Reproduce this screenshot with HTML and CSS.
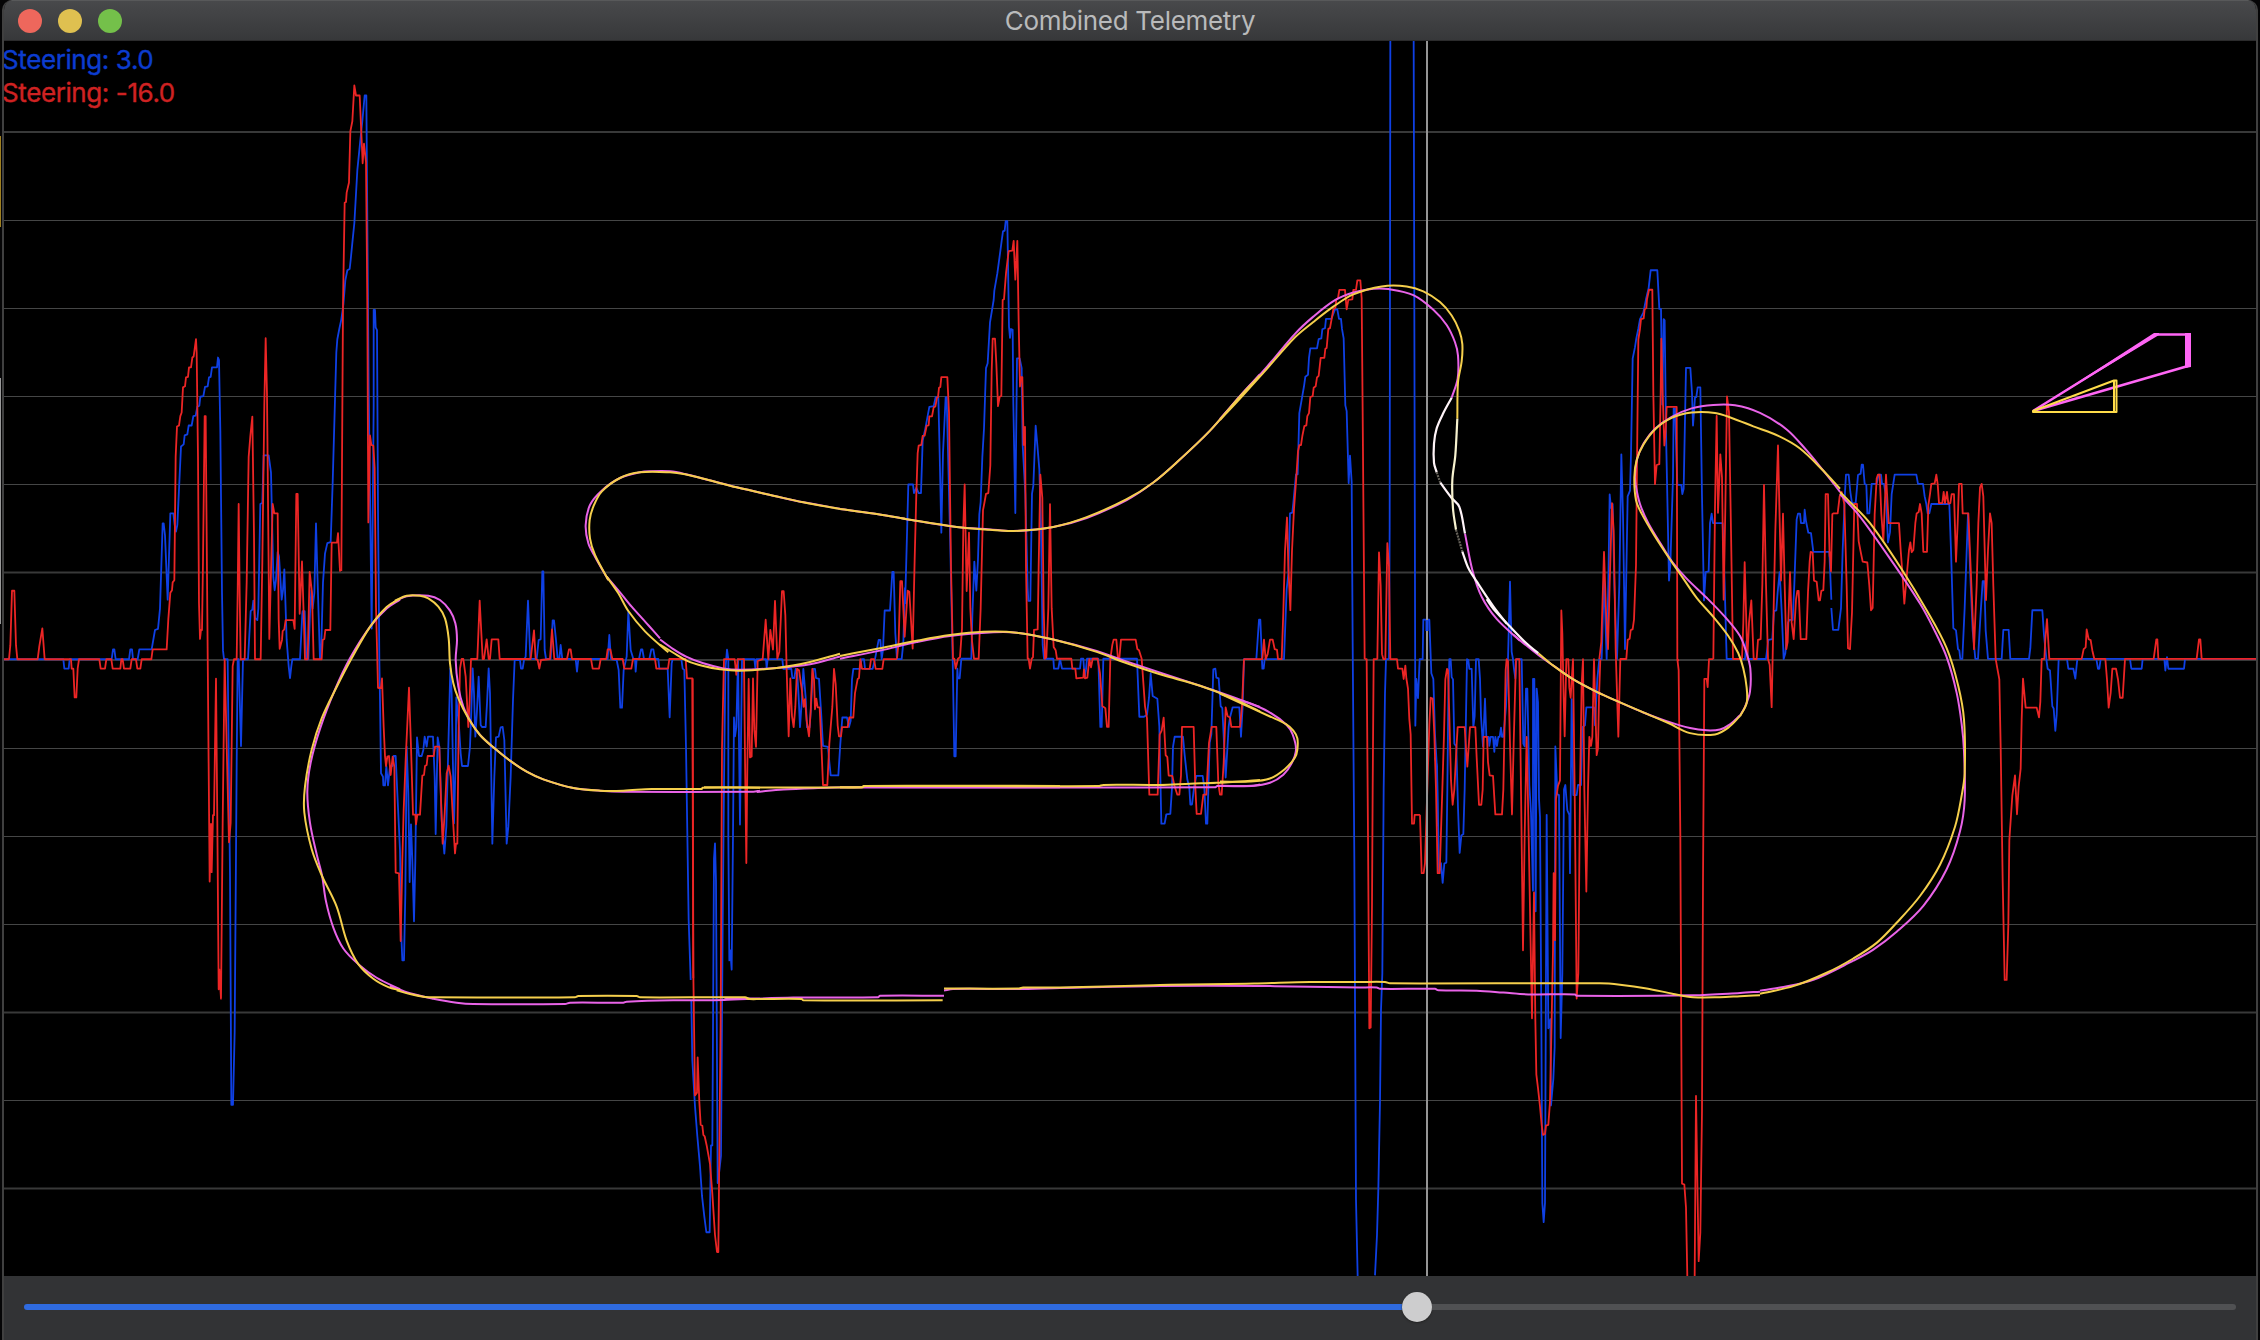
FILE: index.html
```html
<!DOCTYPE html>
<html lang="en">
<head>
<meta charset="utf-8">
<title>Combined Telemetry</title>
<link rel="stylesheet" href="styles.css">
</head>
<body>
<div class="edge edge-gold"></div>
<div class="edge edge-grey"></div>
<main class="window">
  <header class="titlebar">
    <div class="lights"><span class="light close"></span><span class="light minimise"></span><span class="light expand"></span></div>
    <h1>Combined Telemetry</h1>
  </header>
  <section class="plot">
    <svg class="chart" viewBox="4 41 2252 1235" preserveAspectRatio="none">
      <g class="grid">
        <path class="heavy" d="M4 132H2256M4 572.5H2256M4 660H2256M4 1012.5H2256M4 1188.5H2256"/>
        <path d="M4 220.500H2256M4 308.500H2256M4 396.500H2256M4 484.500H2256M4 748.500H2256M4 836.500H2256M4 924.500H2256M4 1100.500H2256"/>
      </g>

      <g class="blue">
        <polyline class="a" points="0,687 190,687 193,705 206,705 209,687 335,687 339,668 343,668 347,687 387,687 391,668 396,668 399,687 413,687 418,668 455,668 465,631 474,629 480,590 488,427 491,427 495,450 503,573 511,408 520,408 524,430 528,443 532,430 543,280 551,276 554,259 562,257 566,240 575,240 580,222 587,221 592,204 598,202 601,185 610,184 615,166 623,165 627,148 632,147 636,129 651,129 654,110 657,115 661,250 666,560 669,670 672,687 683,687 690,1100 694,1539 699,1539 704,1400 710,890 713,687 716,687 723,853 729,687 744,687 752,595 757,592 760,575 765,608 772,612 775,590 781,390 787,388 791,297 806,297 813,330 820,530 824,555 828,535 833,482 837,490 845,573 849,555 853,515 860,650 866,700 870,723 874,700 877,687 900,687 907,600 908,595 914,595 919,687 925,687 930,600 934,555 938,590 943,560 948,427 952,520 960,687 964,660 969,540 975,485 982,465 992,463 998,350 1009,100 1012,75 1018,55 1024,37 1030,10"/>
        <polyline class="b" points="190,600 196,540 202,515 209,512 212,490 218,440 223,400 232,270 240,205 247,150 254,87 259,87 262,400 266,800 275,1393 281,850 281,612 285,612 287,655 291,662 294,1100 298,1470 300,1568"/>
        <polyline class="c" points="120,420 123,640 129,650 130,676 135,676 139,618 144,676 150,620 158,618 161,588 167,588 172,700 180,870 184,1130 187,1201 192,1201 196,1000 200,560 205,700 209,966 213,793 217,900 222,1084 226,900 231,532 237,588 245,588 250,570 254,530 260,560 264,530 279,530 284,650 287,822 293,532 298,560 305,780 313,881 319,800 325,560 331,325 335,400 342,790 347,600 349,412 357,500 362,580 366,618 384,618 390,560 394,450 398,325 402,400 406,530 411,450 416,350 422,495 426,501 437,501 441,430 446,325 450,400 457,851 463,650 468,532 476,530 482,502 488,501 493,540 500,851 505,800 512,650 519,420 524,300 540,300 543,326 548,326 552,300 557,290 564,122 571,296 590,297 596,240 602,238 607,34 610,34 614,270 618,297 632,297 638,181 642,181 648,240 653,297 658,297 662,255 667,297 707,297 711,335 715,297 803,297 808,225 813,297 830,300 836,330 841,443 846,443 851,330 860,290 865,155 872,270 880,297 885,297 887,335 890,297 897,297 903,268 907,268 912,297 928,297 934,268 940,268 945,297 955,297 958,326 983,326 989,472 995,310 998,297 1024,297 1028,326 1033,330 1038,560 1046,1080 1052,1260"/>
        <polyline class="d" points="94,960 97,1090 105,1190 112,1255 120,1320 126,1385 133,1430 139,1464 149,1464 153,1275 157,1275 162,650 165,617 168,700 173,1357 178,1330 183,1297 188,800 192,487 196,240 201,195 205,216 205,600 208,872 211,850 215,892 219,600 222,343 225,384 229,364 234,216 240,576 246,218 250,216 283,216 286,235 289,216 318,216 320,235 323,216 367,216 370,237 394,237 397,257 403,257 407,237 412,250 416,300 420,364 426,300 430,237 437,300 441,364 449,364 453,320 459,237 465,237 468,257 477,259 484,340 489,405 504,407 508,440 512,469 535,469 541,400 547,343 561,343 567,364 572,350 576,260 580,237 600,237 605,216 612,216 615,237 638,237 645,216 656,174 661,174 665,216 669,195 674,110 690,110 697,26 701,26 706,160 711,216 725,216 730,180 735,60"/>
        <polyline class="e" points="195,990 198,910 205,697 219,697 222,718 229,705 236,718 243,718 248,590 256,560 268,507 281,505 287,483 295,483 299,620 304,815 309,620 317,483 320,483 325,650 331,850 338,1124 343,1363 347,1363 352,1148 354,1172 359,1172 364,1124 388,1124 394,1124 397,1020 403,886 409,957 414,880 418,770 422,740 427,630 432,560 438,412 443,400 450,300 461,245 463,222 472,180 481,125 485,100 489,77 494,75 497,52 502,52 507,310 510,338 513,316 518,318 520,500 526,767 531,388 539,388 545,412 548,600 556,720 563,950 565,982 571,982 576,720 580,700 587,553 592,600 598,660 603,800 608,1090 612,1124 640,1124 642,1148 655,1148 660,1124 666,1148 720,1148 723,1124 730,1124 734,1170 738,1150 741,1124 775,1124 781,1291 785,1291 790,1124 891,1124 898,1266 912,1266 921,1261 927,1220 932,1160 938,1215 952,1222 958,1290 964,1528 974,1528 979,1505 991,1504 996,1440 999,1340 1004,1315 1029,1315 1034,1360 1042,1420 1048,1440 1051,1481 1056,1481 1062,1440 1069,1411 1088,1411 1093,1440 1098,1528 1102,1528 1109,1330 1114,1310 1120,1150 1126,1148 1129,1170 1136,1172 1142,1240 1147,1245 1157,1415 1166,1290 1170,1268 1178,1243 1198,1243 1203,1315 1208,1240 1212,1124"/>
        <polyline class="f" points="70,1043 109,1043 117,940 121,940 127,1068 131,1068 134,1043 192,1043 200,860 205,820 210,662 217,660 220,635 228,560 233,560 238,400 247,355 252,330 256,305 264,300 267,256 271,231 291,231 296,207 304,205 307,181 315,178 318,154 334,154 345,129 352,129 357,154 363,154 366,180 371,205 376,380 380,395 386,583 390,511 395,580 398,1000 403,1568 408,2456 413,2656"/>
        <polyline class="g" points="45,1558 51,1470 55,1370 60,1180 63,980 67,900 71,500 75,290 78,216 87,216"/>
        <polyline class="f" points="507,1043 509,700 511,-580"/>
        <polyline class="f" points="581,-580 586,1217 589,1095 594,1145 599,1043 608,1043 610,940 628,940 634,1080 640,1095 645,1240 651,1330 653,1480"/>
        <polyline class="g" points="225,430 231,450 235,600 237,682 243,660 248,703 253,661 259,659 262,500 265,300 268,216 272,216 275,255 279,260 283,400 289,406 294,540 299,638 304,600 310,597 314,500 321,216 325,218 328,237 335,237 340,364 344,340 348,216 356,216 360,259 363,340 369,406 375,302 379,385 386,385 388,405 392,385 399,385 403,418 406,385 411,405 415,385 419,385 423,365 426,385 430,385 438,320 444,216 450,47 455,200 459,216 462,237 466,258 469,216 485,216 490,400 494,406 498,280 502,280 508,490 513,550 519,720 519,259 523,259 527,765 530,280 534,310 537,520 540,560 544,1000 547,1400 551,1442 555,1400 560,555 565,1020 571,1000 573,1188 580,1130 584,1060 586,406 592,510 597,512 602,1041 607,900 612,500 616,490 622,545 628,555 630,682 635,303 640,512 650,512 654,490 663,490 667,364 675,360 679,321 702,321 705,360 712,259 718,216 725,216"/>
        <polyline class="h" points="178,1095 185,1095 192,880 200,1095 205,900 209,665 213,700 218,690 223,900 231,1095 238,900 244,560 249,720 255,1069 263,670 270,655 273,560 278,310 285,280 289,257 295,232 300,207 310,190 318,155 326,125 332,79 352,79 358,180 363,180 367,430 371,207 374,210 378,500 387,890 391,850 399,620 401,440 405,440 412,640 424,640 427,664 431,650 438,334 451,334 456,400 459,485 465,412 469,410 473,385 481,385 486,670 492,942 497,868 506,866 510,740 515,715 519,740 548,740 554,900 560,1095 615,1095 619,1050 624,1095 678,1095 685,1045 697,1043 702,970 709,968 713,920 719,868 725,970 731,1095 736,1080 744,1000 748,993 758,993 763,900 770,730 774,715 780,715 783,740 792,740 794,705 798,735 805,765 813,766 820,815 868,815 874,940"/>
        <polyline class="i" points="214,690 219,739 235,739 243,690 248,560 255,430 258,391 266,391 271,430 276,455 287,455 291,420 294,392 302,389 305,369 309,369 314,412 319,414 322,478 328,478 335,412 350,412 356,391 363,391 366,412 372,412 378,440 384,543 390,520 395,435 404,391 469,391 474,412 489,412 494,440 499,457 503,478 508,478 514,457 568,457 573,560 580,735 588,740 594,782 598,785 601,804 607,804 614,690 624,478 630,600 638,740 646,804 654,804 662,700 668,630 673,630 677,740 684,804 725,804 730,739 746,739 751,804 807,804 811,780 817,695 847,695 852,750 860,810 863,826 870,830 877,910 881,915 886,965 890,930 896,804 921,804 925,826 940,826 946,848 952,804 1009,804 1014,826 1018,826 1022,804 1110,804 1114,826 1145,826 1148,804 1213,804 1216,830 1221,800 1225,826 1272,826 1275,804 1490,804"/>
      </g>

      <g class="red">
        <polyline class="a" points="0,687 27,687 31,660 36,556 43,556 48,660 52,687 113,687 118,662 127,628 134,687 213,687 215,705 220,705 224,760 229,760 233,705 237,687 298,687 302,705 315,705 319,687 334,687 338,705 361,705 364,687 368,687 372,705 391,705 395,687 408,687 412,705 421,705 425,687 454,687 458,668 500,668 505,610 511,560 516,555 518,540 523,536 527,300 531,242 537,240 541,222 545,215 549,167 555,165 558,148 564,147 567,129 573,129 577,110 581,108 588,75 590,100 594,300 597,580 600,648 603,631 606,631 609,500 614,222 617,222 622,600 629,1112 633,1002 635,1094 639,985 642,985 648,724 652,1000 656,1318 658,1280 663,1336 668,1000 674,687 680,850 687,1037 692,1000 698,700 702,687 710,687 713,560 716,390 719,560 722,687 734,687 740,540 746,300 751,260 757,223 762,450 765,687 782,687 787,500 793,200 797,73 801,180 808,648 813,520 818,390 823,408 833,408 836,610 839,667 846,650 848,633 853,630 857,612 880,612 884,629 889,371 893,371 899,600 906,500 911,600 915,687 923,687 929,520 936,560 941,687 965,687 968,650 973,648 976,631 991,631 995,464 1011,464 1014,446 1020,518 1024,515"/>
        <polyline class="b" points="184,1252 189,600 194,350 198,348 200,325 207,300 211,175 217,150 223,62 228,87 239,87 248,253 252,205 258,250 262,600 265,1133 270,920 274,943 280,945 284,1000 288,1340 294,1538 303,1538"/>
        <polyline class="c" points="115,384 123,384 126,355 131,500 135,588 138,618 142,590 147,588 152,645 158,590 163,620 167,938 177,940 182,1143 187,900 191,750 197,600 207,383 213,560 219,764 226,764 228,793 232,764 240,764 247,647 252,645 255,618 260,615 263,588 281,588 285,560 298,560 303,720 308,851 314,760 320,640 326,617 332,650 339,780 345,880 348,851 352,851 356,500 360,325 365,297 370,297 377,350 385,501 389,420 393,297 412,297 419,122 428,297 432,297 440,238 446,297 450,297 455,238 475,238 479,297 572,297 582,211 587,297 593,300 598,326 603,300 630,297 636,208 643,297 681,297 687,268 692,268 696,297 753,297 758,326 777,326 782,297 799,297 803,268 811,268 817,297 848,297 853,326 874,326 879,297 945,297 949,326 984,326 988,297 1037,297 1041,355 1057,355 1060,1255"/>
        <polyline class="d" points="98,258 100,900 105,1166 111,1160 113,1083 118,1180 122,1230 127,1232 130,1252 134,1255 140,1275 150,1315 157,1380 165,1470 171,1507 175,1507 182,1000 186,410 190,278 192,216 224,216 229,250 233,216 249,216 252,216 255,430 259,660 262,450 266,259 270,430 275,428 279,258 283,370 288,407 293,220 308,216 317,130 325,216 331,152 339,195 345,89 352,215 358,200 366,68 371,68 376,120 380,240 386,384 391,258 396,340 401,364 406,320 411,237 417,240 425,280 431,320 435,303 440,350 447,384 452,330 457,237 462,260 465,325 469,302 473,321 479,321 484,400 489,490 502,490 508,400 517,320 522,237 527,270 533,360 537,384 543,384 546,364 563,364 568,343 580,343 585,290 593,259 597,257 601,216 606,237 629,237 633,216 642,216 647,237 667,237 671,216 711,216"/>
        <polyline class="e" points="171,1124 176,1080 181,934 186,934 194,1070 203,957 208,960 218,1099 224,880 229,720 233,620 236,602 244,600 248,578 254,577 260,553 266,552 268,530 276,530 281,508 286,506 291,484 294,483 297,460 301,458 304,434 322,434 327,520 333,900 339,1124 343,1124 347,1148 354,1124 360,1120 366,1050 370,800 374,697 380,958 387,815 391,1000 396,1080 402,1124 416,1124 422,1000 429,760 433,743 438,720 445,718 451,650 455,420 458,340 465,340 469,400 474,505 479,482 484,480 488,245 492,243 498,180 506,125 517,124 521,100 526,195 532,100 536,300 540,457 543,434 547,434 551,600 555,556 558,900 563,1124 566,1124 570,1148 575,1124 579,1120 582,1053 593,1052 596,900 601,673 607,730 611,1000 615,1124 619,1120 625,1000 630,745 635,1000 641,1095 647,1103 651,1124 694,1124 697,1148 706,1148 709,1172 730,1170 732,1150 735,1172 742,1170 748,1125 753,1145 758,1124 773,1124 780,1160 787,1240 796,1245 801,1291 806,1291 811,1124 817,1090 821,1077 829,1077 834,1124 838,1124 843,1077 887,1077 892,1100 897,1103 905,1124 915,1240 921,1270 928,1457 953,1457 959,1310 965,1300 971,1268 977,1360 982,1365 986,1410 997,1411 1003,1434 1012,1457 1018,1457 1023,1410 1026,1291 1061,1291 1066,1440 1070,1504 1083,1504 1090,1457 1099,1457 1107,1330 1115,1291 1129,1291 1135,1430 1140,1457 1145,1457 1151,1380 1157,1243 1163,1265 1170,1268 1174,1291 1200,1291 1206,1240 1212,1124"/>
        <polyline class="f" points="72,1043 127,1043 132,992 137,1043 143,1030 150,992 158,992 164,1017 171,1019 174,1043 185,1043 190,920 195,760 201,673 205,800 211,915 216,760 222,650 228,580 234,500 238,484 243,484 247,460 253,434 259,432 262,408 267,400 271,358 278,356 281,334 287,330 291,307 296,303 302,256 313,256 316,232 320,230 325,180 330,178 340,129 346,125 349,103 354,100 358,78 375,78 380,129 385,104 397,103 400,78 408,78 412,53 421,53 425,100 428,400 434,1043"/>
        <polyline class="g" points="14,216 20,216 24,600 28,1020 32,1018 36,750 38,500 41,216 53,216"/>
        <polyline class="f" points="472,1043 477,764 482,850 486,1030 490,1043 496,1043 502,740 507,800 511,1043 531,1043 534,1068 547,1068 551,1095 556,1060 559,1093 564,1120 568,1200 572,1240 576,1473 582,1473 584,1450 600,1450"/>
        <polyline class="g" points="180,555 185,682 191,682 195,660 204,450 208,360 212,300 218,302 223,380 228,500 233,682 239,682 247,500 252,380 256,260 261,237 264,240 268,340 273,480 278,533 283,500 290,400 293,364 314,364 318,410 322,450 330,364 346,364 350,430 357,533 364,533 368,500 371,385 381,385 384,440 389,469 399,470 406,554 426,554 430,500 437,240 440,216 444,220 450,400 456,554 461,400 468,216 478,216 483,500 489,850 494,600 500,385 505,560 511,800 516,998 522,724 526,1000 529,1120 534,1150 540,1190 545,1230 549,1252 555,1250 558,1232 565,1230 570,1180 575,1000 579,850 581,682 585,828 588,520 594,492 600,480 604,110 607,160 611,300 614,384 619,216 625,216 628,278 632,300 639,216 644,500 650,955 655,900 660,500 665,270 669,216 673,500 679,722 684,500 688,385 693,405 697,385 702,216 710,425 714,410 717,300 721,216"/>
        <polyline class="h" points="178,1095 184,1050 192,815 198,970 204,1069 209,900 216,688 221,760 227,1070 235,1298 241,1095 259,1095 263,1045 269,1042 272,1020 278,1017 282,992 288,850 292,500 295,260 300,232 303,207 311,205 314,181 319,178 321,155 327,130 337,130 340,400 345,638 350,588 358,586 362,400 364,258 368,400 373,537 377,500 380,436 410,436 411,700 412,1095 416,1100"/>
        <polyline class="g" points="952,216 956,240 961,600 966,1358 973,1360 978,1410 982,1562"/>
        <polyline class="g" points="1004,1562 1008,1167 1012,1350 1016,1527 1021,1465 1026,1200 1029,700 1033,259 1040,259 1043,277 1047,216 1060,216"/>
        <polyline class="h" points="520,1095 525,700 530,460 534,713 541,560 546,620 551,940 556,700 561,409 567,450 573,760 579,1095 606,1095 610,1000 614,842 619,1000 622,1095 627,1000 634,942 641,1095 650,1095 654,1045 662,1043 667,900 672,640 678,900 684,1095 689,1110 695,1221 700,1000 706,760 714,537 723,890 729,715 734,900 739,1069 743,1050 750,868 755,1000 761,1043 768,940 772,917 776,917 782,1043 799,1043 804,920 809,840 812,815 818,817 822,890 830,893 836,942 840,942 844,917 850,915 854,840 857,664 864,664 869,828"/>
        <polyline class="i" points="209,563 213,608 217,480 220,478 233,478 239,440 245,430 253,457 260,640 264,780 270,782 276,700 283,457 291,457 296,540 302,564 308,586 322,588 328,640 333,695 338,690 344,480 350,400 354,391 359,391 364,480 370,540 378,391 386,500 417,500 422,560 428,620 433,680 440,620 447,560 451,543 455,565 460,560 466,500 470,478 476,475 480,457 485,478 490,564 501,564 505,460 510,435 514,412 524,411 529,391 533,412 537,455 547,455 551,430 555,455 561,430 565,456 571,455 575,435 582,435 588,586 593,500 597,412 605,412 608,478 625,478 632,600 642,782 650,640 655,500 660,420 665,412 670,440 678,672 684,560 690,478 695,500 700,640 707,804 712,825 718,850 722,1000 728,1300 734,1523 740,1523 745,1400 748,1210 757,1110 765,1065 771,1152 776,1090 782,1050 785,940 789,848 797,913 830,913 837,935 841,900 845,804 853,804 856,760 861,715 868,804 965,804 971,782 977,778 980,738 986,760 992,762 997,785 1003,804 1036,804 1041,850 1046,913 1052,880 1057,826 1068,826 1074,850 1080,891 1088,891 1095,804 1181,804 1189,760 1192,760 1195,804 1310,804 1317,760 1321,760 1325,804 1490,804"/>
      </g>

      <path class="cursor" d="M1427 41V1276"/>
      <path class="cursor-mark" d="M1427 620V631"/>

      <g class="track magenta">
        <polyline class="a" points="1200,573 1160,590 1110,625 1050,685 1005,745 960,820 932,885 922,940 930,1000 950,1060 966,1100 978,1150 1000,1200 1030,1240 1075,1270 1130,1296 1200,1318"/>
        <polyline class="c" points="160,127 200,109 265,107 300,120 330,152 346,190 351,240 347,300 355,380 370,440 395,490 420,525 460,562 510,602 560,635 610,658 700,684 780,692 850,695 1240,695 1260,692"/>
        <polyline class="c" points="150,1278 210,1300 280,1316 350,1328 400,1332 675,1332 690,1328 850,1328 860,1325 1000,1321 1150,1320 1160,1316 1260,1316"/>
        <polyline class="d" points="290,505 370,500 460,497 560,495 1200,495"/>
        <polyline class="d" points="190,958 400,953 655,952 660,949 852,949"/>
        <polyline points="944,990.500 953,989 1014,989 1060,988 1160,986 1260,986 1360,987.500"/>
        <polyline class="e" points="0,1439 1125,1439 1132,1436 1235,1436 1260,1432"/>
        <polyline class="f" points="0,1374 95,1374 150,1366 190,1345 215,1315 228,1280 218,1240 200,1215 145,1180 90,1159 30,1143 0,1133"/>
        <polyline class="e" points="1260,1242 1180,1218 1080,1190 850,1128 770,1105 640,1077 530,1060 460,1059 330,1068 230,1083 120,1104 0,1124"/>
        <polyline class="d" points="540,210 450,227 350,235 240,239 190,236 130,225 80,211 40,194 0,173"/>
        <polyline class="c" points="960,235 920,190 875,140 840,97 800,50"/>
        <polyline class="j" points="115,390 75,320 55,280 47,225 60,165 95,122 150,84 210,67 240,64 300,64 345,72 415,90 500,112 610,137 700,157 810,176"/>
        <polyline class="e" points="0,757 100,768 200,782 350,801 450,807 520,811 640,801 740,779 860,735 940,692 1010,643 1110,565 1200,480 1260,427"/>
        <polyline class="f" points="0,415 60,357 140,280 225,193 280,148 345,105 400,85 460,75 505,76 580,92 640,130 680,170 705,215 714,250 713,310 695,360"/>
        <polyline class="f" points="735,715 757,810 785,880 830,938 900,995"/>
        <polyline class="g" points="460,163 535,207 580,230 640,260 710,287 780,310 850,332 920,351 990,366 1040,371 1080,369 1110,358 1140,338"/>
        <polyline class="h" points="600,1243 615,1220 630,1180 631,1120 620,1080 600,1035 555,985 500,935 440,885 400,845 370,805 325,740 300,690 287,640 285,615 292,570 312,530 345,493 395,462 455,440 520,431 585,432 660,452 740,495 800,550 850,603 900,658"/>
        <polyline class="i" points="240,435 300,485 400,590 480,680 520,735 560,800 590,880 605,950 612,1010 614,1120 600,1190 560,1275 490,1357 410,1415 340,1455 280,1480 160,1523 60,1540 0,1547"/>
        <polyline class="g" points="1200,940 1140,943 1000,948 650,949 645,946 505,946 430,942 350,938 235,937 225,934 60,934 50,931 0,931"/>
      </g>

      <g class="track yellow">
        <polyline class="a" points="1200,571 1160,587 1110,625 1055,685 1010,740 965,800 935,860 915,930 913,980 935,1050 965,1100 1010,1160 1040,1225 1075,1270 1120,1298 1165,1314 1200,1320"/>
        <polyline class="c" points="165,122 200,107 240,107 265,115 295,140 315,175 326,235 330,310 340,370 355,415 385,475 420,525 460,562 510,602 560,635 610,658 700,684 780,692 850,692 935,687 1085,687 1088,683 1260,683"/>
        <polyline class="c" points="170,1291 210,1302 250,1310 280,1312 705,1312 715,1308 890,1308 900,1312 1215,1312 1230,1317 1260,1317"/>
        <polyline class="d" points="132,495 605,495 612,492 1200,492"/>
        <polyline class="d" points="258,954 265,956 425,956 430,959 848,959"/>
        <polyline points="944,988.500 1019,988.500 1023,987.500 1060,987.500 1160,985 1254,983.500 1310,982 1360,982"/>
        <polyline class="e" points="0,1439 68,1439 72,1436 775,1436 790,1433 960,1433 1050,1430 1130,1428 1230,1423 1260,1421"/>
        <polyline class="f" points="0,1363 90,1363 150,1355 195,1330 225,1300 232,1280 232,1250 220,1230 198,1213 150,1193 75,1163 0,1133"/>
        <polyline class="e" points="1260,1253 1170,1218 1080,1190 960,1162 850,1132 770,1107 640,1077 530,1060 430,1058 330,1066 230,1080 120,1098 0,1117"/>
        <polyline class="d" points="540,204 450,222 350,235 240,241 180,238 130,231 80,219 40,202 0,184"/>
        <polyline class="c" points="985,277 915,214 865,153 835,100 800,50"/>
        <polyline class="j" points="115,390 75,315 60,265 59,210 70,170 95,125 150,84 210,67 300,67 345,73 415,90 500,112 610,137 700,157 810,177"/>
        <polyline class="e" points="0,757 100,768 200,782 350,801 450,808 520,811 640,801 740,777 860,733 940,692 1010,643 1110,565 1200,481 1260,430"/>
        <polyline class="f" points="0,418 60,362 140,285 225,202 280,162 340,122 400,90 485,69 560,69 610,82 660,110 695,145 718,185 727,220 725,265 714,320 712,415"/>
        <polyline class="g" points="535,203 580,230 640,260 710,287 780,310 850,332 925,355 990,377 1065,380 1105,365 1140,340"/>
        <polyline class="h" points="600,1245 620,1210 620,1170 610,1120 595,1080 565,1035 520,985 470,935 430,885 390,835 345,775 305,715 288,680 283,620 290,575 310,535 345,495 395,465 455,451 525,452 575,465 640,487 715,512 780,545 850,603 900,650"/>
        <polyline class="i" points="240,430 260,445 330,500 425,603 500,695 560,780 595,865 612,940 614,1060 605,1110 585,1180 540,1265 480,1335 410,1395 350,1440 280,1475 200,1507 100,1537 0,1554"/>
        <polyline class="g" points="1200,948 1140,950 1080,952 1000,952 940,945 860,933 780,925 720,922 90,922 75,919 0,919"/>
      </g>

      <g class="track braking">
        <polyline class="f" points="695,360 670,400 650,440 642,480 642,530 650,555"/>
        <polyline class="f faint" points="650,555 661,582"/>
        <polyline class="f" points="661,582 695,622 718,645 735,715"/>
        <polyline class="f cream" points="712,415 706,510 697,575 699,650 708,705"/>
        <polyline class="f faint" points="708,705 727,762"/>
        <polyline class="f" points="727,762 745,805 770,840 820,905 860,950"/>
        <polyline class="g" points="380,85 400,106 450,145 500,182 535,203"/>
      </g>

      <g class="vectors">
        <path class="vec-magenta" d="M2033 411L2154 333H2159V335Z"/>
        <path class="vec-magenta line" d="M2033 411L2156 334.500H2190M2188 366L2033 411"/>
        <path class="vec-magenta" d="M2185 333H2191V367L2185 368Z"/>
        <path class="vec-yellow line" d="M2033 411L2114 380.500V412H2033ZM2114 380.500H2116.500V412H2110"/>
      </g>
    </svg>
    <ul class="readout">
      <li class="lap-a">Steering: 3.0</li>
      <li class="lap-b">Steering: -16.0</li>
    </ul>
  </section>
  <footer class="scrubber">
    <span class="played"></span><span class="knob"></span><span class="remaining"></span>
  </footer>
</main>
<script src="tracks.js"></script>
</body>
</html>
```
FILE: tracks.js
```js
// Rounds the sampled racing lines into smooth curves.
document.querySelectorAll(".track polyline").forEach((line) => {
  const n = line.getAttribute("points").trim().split(/\s+/).map((p) => p.split(",").map(Number));
  if (n.length < 3) return;
  const tangents = n.map((_, i) => {
    const a = n[Math.max(0, i - 1)];
    const b = n[Math.min(n.length - 1, i + 1)];
    const len = Math.hypot(b[0] - a[0], b[1] - a[1]) || 1;
    return [(b[0] - a[0]) / len, (b[1] - a[1]) / len];
  });
  let d = `M${n[0]}`;
  for (let i = 1; i < n.length; i++) {
    const p = n[i - 1], q = n[i], s = tangents[i - 1], t = tangents[i];
    const h = Math.hypot(q[0] - p[0], q[1] - p[1]) / 3;
    d += `C${p[0] + s[0] * h} ${p[1] + s[1] * h} ${q[0] - t[0] * h} ${q[1] - t[1] * h} ${q[0]} ${q[1]}`;
  }
  const path = document.createElementNS("http://www.w3.org/2000/svg", "path");
  path.setAttribute("d", d);
  path.setAttribute("class", `${line.getAttribute("class") || ""} line`);
  line.replaceWith(path);
});
```
FILE: styles.css
```css
* { box-sizing: border-box; }

body {
  margin: 0;
  height: 1340px;
  padding: 0 2px;
  background: #050506;
  font-family: Inter, "Liberation Sans", sans-serif;
  overflow: hidden;
}

/* slivers of the windows behind */
.edge { position: absolute; left: 0; width: 1px; }
.edge-gold { top: 136px; height: 91px; background: #a08020; }
.edge-grey { top: 378px; height: 246px; background: #999; }

.window {
  display: flex;
  flex-direction: column;
  height: 1340px;
  border: solid #404040;
  border-width: 0 2px;
  border-radius: 10px 10px 0 0;
  overflow: hidden;
  background: #000;
}

.titlebar {
  display: grid;
  grid-template-columns: 1fr auto 1fr;
  align-items: center;
  height: 41px;
  flex: none;
  padding-left: 14px;
  padding-right: 14px;
  background: linear-gradient(#48494b, #37383a);
  border-top: 1px solid #58595a;
  border-bottom: 1px solid #2b2b2c;
}

.lights { display: flex; gap: 16px; }
.light { width: 24px; height: 24px; border-radius: 50%; }
.close { background: #ee675c; }
.minimise { background: #dfc050; }
.expand { background: #74c04a; }

h1 {
  margin: 0;
  color: #b9babb;
  font-size: 26px;
  font-weight: 400;
  line-height: 38px;
  letter-spacing: -0.3px;
  white-space: nowrap;
}

.plot { position: relative; height: 1235px; flex: none; }
.chart { display: block; width: 2252px; height: 1235px; }

.chart polyline, .chart .line {
  fill: none;
  vector-effect: non-scaling-stroke;
  stroke-linejoin: round;
}

.grid path { fill: none; stroke: #454646; stroke-width: 1; }
.grid .heavy { stroke: #383939; stroke-width: 2; }

.blue { stroke: #0f40e4; stroke-width: 1.8; }
.red { stroke: #ec2525; stroke-width: 1.8; }
.track { stroke-width: 2; }
.magenta { stroke: #e963e8; }
.yellow { stroke: #f5cf4c; }
.braking { stroke: #fff4f8; stroke-width: 2.2; }
.cream { stroke: #f7f2cf; }
.faint { stroke: #66625a; stroke-dasharray: 2 1; }
.cursor { stroke: #959595; stroke-width: 2; }
.cursor-mark { stroke: #1747e8; stroke-width: 3; }
.vec-magenta { fill: #ff66f5; }
.vec-magenta.line { stroke: #ff66f5; stroke-width: 2.6; }
.vec-yellow { stroke: #ffdc4a; stroke-width: 2; }

/* plot tiles: each run of samples is stored in its tile's own units */
.a { transform: translate(0, 300px) scale(.33333, .52296); }
.b { transform: translate(280px, 60px) scale(.33333, .40816); }
.c { transform: translate(340px, 560px) scale(.33333, .33333); }
.d { transform: translate(660px, 560px) scale(.33333, .45918); }
.e { transform: translate(840px, 200px) scale(.33333, .40816); }
.f { transform: translate(1220px, 260px) scale(.33333, .38265); }
.g { transform: translate(1360px, 560px) scale(.33333, .45918); }
.h { transform: translate(1540px, 240px) scale(.33333, .38265); }
.i { transform: translate(1760px, 300px) scale(.33333, .44643); }
.j { transform: translate(570px, 450px) scale(.33333, .33333); }

.readout {
  position: absolute;
  top: 2px;
  left: -2px;
  margin: 0;
  padding: 0;
  list-style: none;
  font-size: 26px;
  line-height: 33px;
  letter-spacing: -0.4px;
  -webkit-text-stroke: 0.4px;
}
.lap-a { color: #0c3ccf; }
.lap-b { color: #cf2222; }

.scrubber {
  display: flex;
  align-items: center;
  height: 64px;
  padding: 0 20px 2px;
  background: #323335;
}
.played { width: 1378px; height: 6px; border-radius: 3px 0 0 3px; background: #2f6be0; }
.knob { width: 30px; height: 30px; border-radius: 50%; background: #cdcdce; box-shadow: 0 1px 2px #222; }
.remaining { flex: 1; height: 6px; border-radius: 0 3px 3px 0; background: #505153; }
```
